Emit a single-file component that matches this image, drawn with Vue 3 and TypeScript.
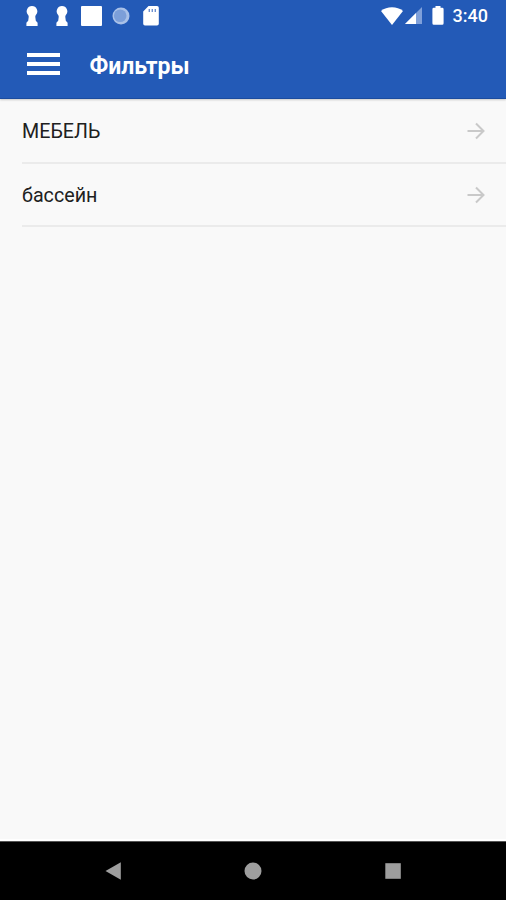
<script setup lang="ts">
import { ref } from 'vue'

interface FilterItem {
  id: number
  label: string
}

const title = 'Фильтры'
const time = '3:40'
const filters = ref<FilterItem[]>([
  { id: 1, label: 'МЕБЕЛЬ' },
  { id: 2, label: 'бассейн' },
])
</script>

<template>
  <div class="screen">
    <header class="top">
      <div class="status">
        <div class="notices">
          <svg v-for="n in 2" :key="n" class="keyhole" viewBox="0 0 12 20">
            <path d="M6 0a5.300 5.300 0 0 1 3.900 8.900Q9.200 9.600 9.300 11l.5 3.800 1.800 2V20H.4v-3.200l1.800-2 .5-3.800Q2.800 9.600 2.100 8.900A5.300 5.300 0 0 1 6 0z" fill="#fff" />
          </svg>
          <span class="block"></span>
          <svg class="dial" viewBox="0 0 18 18">
            <circle cx="9" cy="9" r="8.500" fill="#a9c1e8" />
            <circle cx="8.200" cy="8.800" r="6.300" fill="#7c9fd9" />
          </svg>
          <svg class="sd" viewBox="0 0 16 20">
            <path d="M5.500 0H14a1.800 1.800 0 0 1 1.800 1.800v16A1.800 1.800 0 0 1 14 19.600H2a1.800 1.800 0 0 1-1.800-1.800V5.500z" fill="#fff" />
            <path d="M6.300 3v3M9.300 3v3M12.300 3v3" stroke="#6d90cf" stroke-width="1.400" />
          </svg>
        </div>
        <div class="system">
          <svg class="wifi" viewBox="0 0 22 18">
            <path d="M11 18L0 4Q4.600.3 11 .3T22 4z" fill="#fff" />
          </svg>
          <svg class="signal" viewBox="0 0 17 17">
            <path d="M17 0v17H0z" fill="#7fa0da" />
            <path d="M11 6v11H0z" fill="#fff" />
          </svg>
          <svg class="battery" viewBox="0 0 12 19">
            <path d="M3.500 0h5v1.800h1.700Q11.600 1.800 11.600 3.200v14Q11.600 18.700 10.200 18.700H1.800Q.4 18.700.4 17.200v-14Q.4 1.800 1.800 1.800h1.700z" fill="#fff" />
          </svg>
          <span class="time">{{ time }}</span>
        </div>
      </div>
      <div class="toolbar">
        <button class="menu" type="button">
          <span></span><span></span><span></span>
        </button>
        <h1>{{ title }}</h1>
      </div>
    </header>

    <main class="content">
      <ul class="list">
        <li v-for="item in filters" :key="item.id" class="row">
          <span class="label">{{ item.label }}</span>
          <svg class="arrow" viewBox="0 0 18 18">
            <path d="M.5 9h16M9 1.500L16.500 9 9 16.500" fill="none" stroke="#c9c9c9" stroke-width="2" />
          </svg>
        </li>
      </ul>
    </main>

    <nav class="navbar">
      <svg viewBox="0 0 20 20"><path d="M2.500 10L17.800 1.300v17.400z" fill="#9e9e9e" /></svg>
      <svg viewBox="0 0 20 20"><circle cx="10" cy="10" r="8.500" fill="#9e9e9e" /></svg>
      <svg viewBox="0 0 20 20"><path d="M2.300 2.200h15.500v15.600H2.300z" fill="#9e9e9e" /></svg>
    </nav>
  </div>
</template>

<style>
body {
  margin: 0;
}
</style>

<style scoped>
.screen {
  display: flex;
  flex-direction: column;
  width: 100%;
  height: 100vh;
  overflow: hidden;
  background: #f9f9f9;
  font-family: Roboto, "Liberation Sans", sans-serif;
}
.top {
  box-sizing: border-box;
  height: 99px;
  flex: none;
  background: #235ab7;
  border-bottom: 1px solid #1b4c9f;
  box-shadow: 0 1px 2px rgba(0, 0, 0, 0.2);
}
.status {
  display: flex;
  justify-content: space-between;
  align-items: center;
  height: 31px;
  padding: 0 18px 0 26px;
}
.notices,
.system {
  display: flex;
  align-items: center;
}
.keyhole {
  width: 12px;
  height: 20px;
  margin-right: 18px;
}
.keyhole + .block {
  margin-left: -5px;
}
.block {
  width: 21px;
  height: 20px;
  border-radius: 1px;
  background: #fff;
}
.dial {
  width: 18px;
  height: 18px;
  margin-left: 10px;
}
.sd {
  width: 16px;
  height: 20px;
  margin-left: 13px;
}
.wifi {
  width: 22px;
  height: 18px;
}
.signal {
  width: 17px;
  height: 17px;
  margin-left: 2px;
}
.battery {
  width: 12px;
  height: 19px;
  margin-left: 10px;
}
.time {
  margin-left: 9px;
  color: #fff;
  font-size: 18px;
  font-weight: 500;
  line-height: 30px;
}
.toolbar {
  display: flex;
  align-items: center;
  height: 67px;
  padding-left: 27px;
}
.menu {
  display: flex;
  flex-direction: column;
  gap: 5px;
  width: 33px;
  margin-bottom: 1px;
  padding: 0;
  border: 0;
  background: none;
}
.menu span {
  width: 100%;
  height: 4px;
  background: #fff;
}
h1 {
  margin: 4px 0 0 29.500px;
  color: #fff;
  font-size: 23px;
  font-weight: 700;
  line-height: 30px;
}
.content {
  flex: 1;
  border-bottom: 2px solid #fff;
}
.list {
  margin: 0;
  padding: 0 0 0 22px;
  list-style: none;
}
.row {
  box-sizing: border-box;
  display: flex;
  align-items: center;
  justify-content: space-between;
  height: 63px;
  padding-right: 21px;
  border-bottom: 2px solid #ebebeb;
}
.row:first-child {
  height: 65px;
}
.label {
  padding-top: 2px;
  color: #202020;
  font-size: 19.700px;
  line-height: 24px;
}
.arrow {
  width: 18px;
  height: 18px;
}
.navbar {
  box-sizing: border-box;
  display: flex;
  justify-content: center;
  gap: 120px;
  height: 59px;
  flex: none;
  padding-top: 19px;
  border-top: 1px solid #555;
  background: #000;
}
.navbar svg {
  width: 20px;
  height: 20px;
}
</style>
